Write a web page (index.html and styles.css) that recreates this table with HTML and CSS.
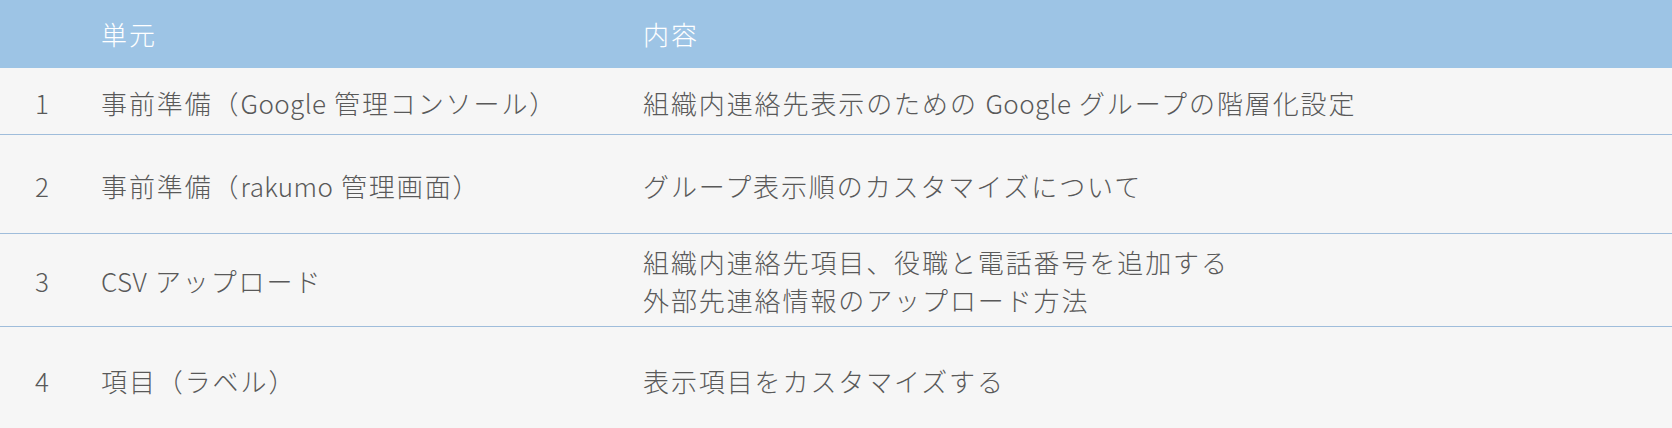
FILE: index.html
```html
<!DOCTYPE html>
<html lang="ja">
<head>
<meta charset="utf-8">
<title>単元</title>
<link rel="stylesheet" href="styles.css">
</head>
<body>
<table class="units">
  <thead>
    <tr class="head">
      <th class="num"></th>
      <th class="unit">単元</th>
      <th class="content">内容</th>
    </tr>
  </thead>
  <tbody>
    <tr class="r1">
      <td class="num">1</td>
      <td class="unit">事前準備（<span class="latin">Google</span> 管理コンソール）</td>
      <td class="content">組織内連絡先表示のための <span class="latin">Google</span> グループの階層化設定</td>
    </tr>
    <tr class="r2">
      <td class="num">2</td>
      <td class="unit">事前準備（<span class="latin">rakumo</span> 管理画面）</td>
      <td class="content">グループ表示順のカスタマイズについて</td>
    </tr>
    <tr class="r3">
      <td class="num">3</td>
      <td class="unit"><span class="latin">CSV</span> アップロード</td>
      <td class="content">組織内連絡先項目、役職と電話番号を追加する<br>外部先連絡情報のアップロード方法</td>
    </tr>
    <tr class="r4">
      <td class="num">4</td>
      <td class="unit">項目（ラベル）</td>
      <td class="content">表示項目をカスタマイズする</td>
    </tr>
  </tbody>
</table>
</body>
</html>
```

FILE: styles.css
```css
html, body {
  margin: 0;
  padding: 0;
  background: #f6f6f6;
}
.units {
  width: 100%;
  border-collapse: collapse;
  table-layout: fixed;
  font-family: "Noto Sans CJK JP", "Noto Sans", sans-serif;
  font-weight: 300;
  font-size: 26px;
  line-height: 38px;
  color: #595959;
  letter-spacing: 1.9px;
}
.latin {
  letter-spacing: 0.4px;
}
.units th,
.units td {
  padding: 0;
  text-align: left;
  vertical-align: middle;
  font-weight: 300;
  box-sizing: border-box;
}
.units .num {
  width: 101px;
  padding-left: 35px;
}
.units .unit {
  width: 542px;
}
.head {
  background: #9dc4e5;
  color: #ffffff;
  height: 68px;
}
.units tbody tr {
  background: #f6f6f6;
  border-bottom: 1px solid #9fbddb;
}
.units tbody tr.r4 {
  border-bottom: none;
}
.r1 { height: 66px; }
.r2 { height: 99px; }
.r3 { height: 93px; }
.r4 { height: 110px; }
.r1 td { padding-top: 5px; }
.r2 td { padding-top: 4px; }
.r3 td { padding-top: 2px; }
.r4 td { padding-top: 0; }
```
